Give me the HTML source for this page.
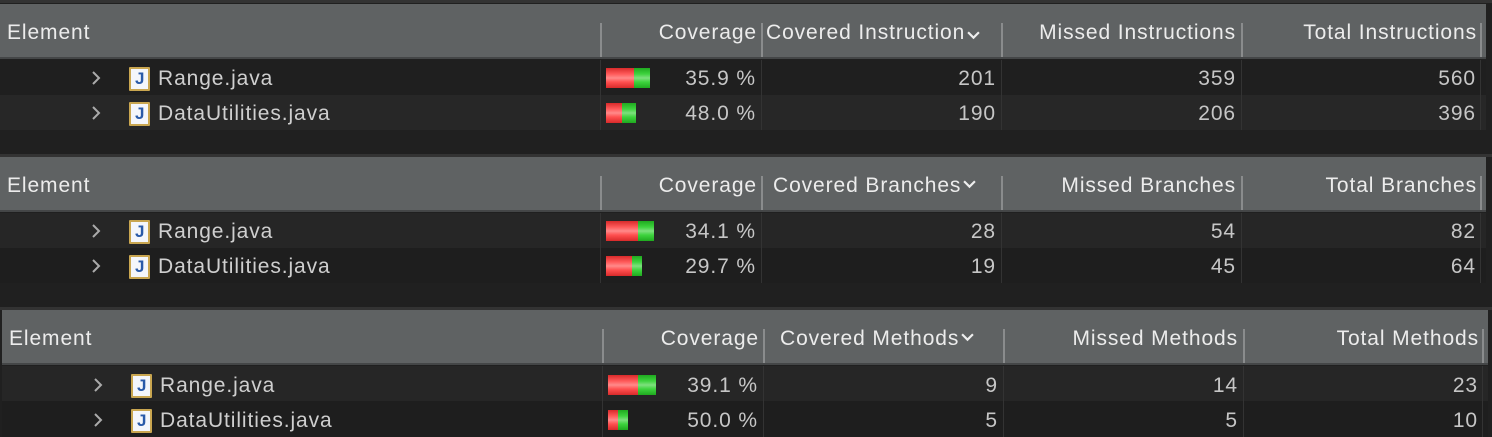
<!DOCTYPE html>
<html><head><meta charset="utf-8"><style>
*{margin:0;padding:0;box-sizing:border-box}
body{width:1492px;height:437px;background:#202020;position:relative;overflow:hidden;font-family:"Liberation Sans",sans-serif;font-size:21px;letter-spacing:0.9px}
.t{position:absolute;left:0;width:1492px}
.hd{position:absolute;left:0;width:1486px;height:55px;background:#5f6263;border-bottom:2px solid #444647}
.r{position:absolute;left:0;width:1486px;height:35px}
.s{position:absolute;width:2px;background:#8a8c8d;top:19px;height:34px}
.rs{position:absolute;width:1px;background:#333}
.h{position:absolute;color:#ececec;top:17px;white-space:nowrap}
.c{position:absolute;color:#c6c6c6;top:7px;white-space:nowrap;text-align:right}
.bar{position:absolute;top:8px;height:20px;display:flex}
.rd{background:linear-gradient(#d82a2a,#ff5a5a 30%,#ff8a8a 50%,#ff5050 70%,#d82a2a)}
.gr{background:linear-gradient(#1faa1f,#3ed33e 30%,#7ee07e 50%,#3ed33e 70%,#1faa1f)}
.chev{position:absolute;top:10px}
.ic{position:absolute;top:7px;width:21px;height:24px;background:#f4f6fb;border:2px solid #c9a650;border-radius:1px}
.ic b{position:absolute;left:4px;top:0px;color:#2a5aa8;font:bold 17px "Liberation Sans",sans-serif;letter-spacing:0}
.nm{position:absolute;top:7px;color:#cfcfcf}
.dn{position:absolute;top:27px}
.h svg{margin-left:2px;vertical-align:3px}
</style></head><body>
<svg width="0" height="0" style="position:absolute"><defs>
<symbol id="rc" viewBox="0 0 12 16"><path d="M3 2 L9 8 L3 14" fill="none" stroke="#aaa" stroke-width="2"/></symbol>
<symbol id="dc" viewBox="0 0 12 8"><path d="M1 1 L6 6 L11 1" fill="none" stroke="#eee" stroke-width="2"/></symbol>
</defs></svg>

<!-- Table 1 -->
<div class="t" style="top:0;height:3px;background:#333"></div>
<div class="t" style="top:4px">
 <div class="hd"></div>
 <div class="h" style="left:7px">Element</div>
 <div class="s" style="left:600px"></div><div class="h" style="right:735px">Coverage</div>
 <div class="s" style="left:761px"></div><div class="h" style="left:766px;width:200px;overflow:hidden">Covered Instruction</div><svg class="dn" style="left:967px" width="13" height="9"><use href="#dc"/></svg>
 <div class="s" style="left:1001px"></div><div class="h" style="right:256px">Missed Instructions</div>
 <div class="s" style="left:1241px"></div><div class="h" style="right:15px">Total Instructions</div>
 <div class="s" style="left:1480px"></div>
</div>
<div class="r" style="top:60px;background:#1f1f1f"></div>
<div class="r" style="top:95px;background:#272727"></div>
<div class="t" style="top:60px">
 <svg class="chev" style="left:90px" width="12" height="16"><use href="#rc"/></svg><div class="ic" style="left:129px"><b>J</b></div><div class="nm" style="left:158px">Range.java</div>
 <div class="bar" style="left:606px"><div class="rd" style="width:28px"></div><div class="gr" style="width:16px"></div></div>
 <div class="c" style="right:736px">35.9 %</div><div class="c" style="right:496px">201</div><div class="c" style="right:256px">359</div><div class="c" style="right:16px">560</div>
</div>
<div class="t" style="top:95px">
 <svg class="chev" style="left:90px" width="12" height="16"><use href="#rc"/></svg><div class="ic" style="left:129px"><b>J</b></div><div class="nm" style="left:158px">DataUtilities.java</div>
 <div class="bar" style="left:606px"><div class="rd" style="width:16px"></div><div class="gr" style="width:14px"></div></div>
 <div class="c" style="right:736px">48.0 %</div><div class="c" style="right:496px">190</div><div class="c" style="right:256px">206</div><div class="c" style="right:16px">396</div>
</div>
<div class="rs" style="left:600px;top:60px;height:70px"></div><div class="rs" style="left:761px;top:60px;height:70px"></div><div class="rs" style="left:1001px;top:60px;height:70px"></div><div class="rs" style="left:1241px;top:60px;height:70px"></div><div class="rs" style="left:1480px;top:60px;height:70px"></div>

<!-- Table 2 -->
<div class="t" style="top:154px;height:3px;background:#333"></div>
<div class="t" style="top:157px">
 <div class="hd"></div>
 <div class="h" style="left:7px">Element</div>
 <div class="s" style="left:600px"></div><div class="h" style="right:735px">Coverage</div>
 <div class="s" style="left:761px"></div><div class="h" style="left:773px">Covered Branches<svg width="13" height="9"><use href="#dc"/></svg></div>
 <div class="s" style="left:1001px"></div><div class="h" style="right:256px">Missed Branches</div>
 <div class="s" style="left:1241px"></div><div class="h" style="right:15px">Total Branches</div>
 <div class="s" style="left:1480px"></div>
</div>
<div class="r" style="top:213px;background:#262626"></div>
<div class="r" style="top:248px;background:#1e1e1e"></div>
<div class="t" style="top:213px">
 <svg class="chev" style="left:90px" width="12" height="16"><use href="#rc"/></svg><div class="ic" style="left:129px"><b>J</b></div><div class="nm" style="left:158px">Range.java</div>
 <div class="bar" style="left:606px"><div class="rd" style="width:32px"></div><div class="gr" style="width:16px"></div></div>
 <div class="c" style="right:736px">34.1 %</div><div class="c" style="right:496px">28</div><div class="c" style="right:256px">54</div><div class="c" style="right:16px">82</div>
</div>
<div class="t" style="top:248px">
 <svg class="chev" style="left:90px" width="12" height="16"><use href="#rc"/></svg><div class="ic" style="left:129px"><b>J</b></div><div class="nm" style="left:158px">DataUtilities.java</div>
 <div class="bar" style="left:606px"><div class="rd" style="width:26px"></div><div class="gr" style="width:10px"></div></div>
 <div class="c" style="right:736px">29.7 %</div><div class="c" style="right:496px">19</div><div class="c" style="right:256px">45</div><div class="c" style="right:16px">64</div>
</div>
<div class="rs" style="left:600px;top:213px;height:70px"></div><div class="rs" style="left:761px;top:213px;height:70px"></div><div class="rs" style="left:1001px;top:213px;height:70px"></div><div class="rs" style="left:1241px;top:213px;height:70px"></div><div class="rs" style="left:1480px;top:213px;height:70px"></div>

<!-- Table 3 -->
<div class="t" style="top:307px;height:3px;background:#333"></div>
<div class="t" style="top:310px">
 <div class="hd" style="left:2px"></div>
 <div class="h" style="left:9px">Element</div>
 <div class="s" style="left:602px"></div><div class="h" style="right:733px">Coverage</div>
 <div class="s" style="left:763px"></div><div class="h" style="left:780px">Covered Methods<svg width="13" height="9"><use href="#dc"/></svg></div>
 <div class="s" style="left:1003px"></div><div class="h" style="right:254px">Missed Methods</div>
 <div class="s" style="left:1243px"></div><div class="h" style="right:13px">Total Methods</div>
 <div class="s" style="left:1482px"></div>
</div>
<div class="r" style="top:366px;left:2px;background:#262626"></div>
<div class="r" style="top:401px;left:2px;background:#1e1e1e;height:36px"></div>
<div class="t" style="top:367px">
 <svg class="chev" style="left:92px" width="12" height="16"><use href="#rc"/></svg><div class="ic" style="left:131px"><b>J</b></div><div class="nm" style="left:160px">Range.java</div>
 <div class="bar" style="left:608px"><div class="rd" style="width:30px"></div><div class="gr" style="width:18px"></div></div>
 <div class="c" style="right:734px">39.1 %</div><div class="c" style="right:494px">9</div><div class="c" style="right:254px">14</div><div class="c" style="right:14px">23</div>
</div>
<div class="t" style="top:402px">
 <svg class="chev" style="left:92px" width="12" height="16"><use href="#rc"/></svg><div class="ic" style="left:131px"><b>J</b></div><div class="nm" style="left:160px">DataUtilities.java</div>
 <div class="bar" style="left:608px"><div class="rd" style="width:10px"></div><div class="gr" style="width:10px"></div></div>
 <div class="c" style="right:734px">50.0 %</div><div class="c" style="right:494px">5</div><div class="c" style="right:254px">5</div><div class="c" style="right:14px">10</div>
</div>
<div class="rs" style="left:602px;top:366px;height:71px"></div><div class="rs" style="left:763px;top:366px;height:71px"></div><div class="rs" style="left:1003px;top:366px;height:71px"></div><div class="rs" style="left:1243px;top:366px;height:71px"></div><div class="rs" style="left:1482px;top:366px;height:71px"></div>
</body></html>
